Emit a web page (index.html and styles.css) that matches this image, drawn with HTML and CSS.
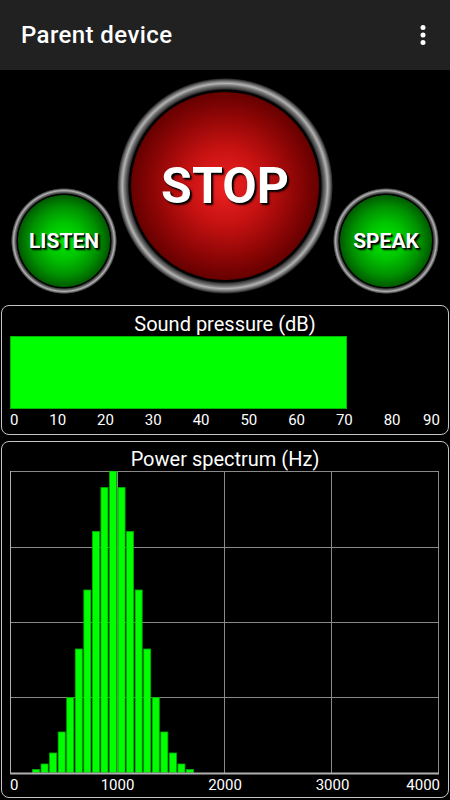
FILE: index.html
```html
<!DOCTYPE html>
<html lang="en">
<head>
<meta charset="utf-8">
<title>Parent device</title>
<link rel="stylesheet" href="styles.css">
</head>
<body>
<header class="appbar">
  <h1 class="title">Parent device</h1>
  <svg class="menu" viewBox="0 0 24 24" aria-label="More options">
    <circle cx="12" cy="6" r="2"/>
    <circle cx="12" cy="12" r="2"/>
    <circle cx="12" cy="18" r="2"/>
  </svg>
</header>
<main class="content">
  <section class="controls">
    <button class="btn btn-small"><span class="face face-green">LISTEN</span></button>
    <button class="btn btn-big"><span class="face face-red">STOP</span></button>
    <button class="btn btn-small"><span class="face face-green">SPEAK</span></button>
  </section>

  <section class="panel panel-db">
    <div class="panel-title">Sound pressure (dB)</div>
    <div class="meter"><div class="meter-fill" style="width:78.3%"></div></div>
    <div class="scale">
      <span class="tick tick-first"><span>0</span></span>
      <span class="tick"><span>10</span></span>
      <span class="tick"><span>20</span></span>
      <span class="tick"><span>30</span></span>
      <span class="tick"><span>40</span></span>
      <span class="tick"><span>50</span></span>
      <span class="tick"><span>60</span></span>
      <span class="tick"><span>70</span></span>
      <span class="tick"><span>80</span></span>
      <span class="tick tick-last"><span>90</span></span>
    </div>
  </section>

  <section class="panel panel-spec">
    <div class="panel-title">Power spectrum (Hz)</div>
    <svg class="plot" width="429" height="304" viewBox="0 0 429 304">
      <g class="grid">
        <line x1="107.5" y1="0" x2="107.5" y2="302"/>
        <line x1="214.5" y1="0" x2="214.5" y2="302"/>
        <line x1="321.5" y1="0" x2="321.5" y2="302"/>
        <line x1="428.5" y1="0" x2="428.5" y2="302"/>
        <line x1="0" y1="0.5" x2="429" y2="0.5"/>
        <line x1="0" y1="76.5" x2="429" y2="76.5"/>
        <line x1="0" y1="151.5" x2="429" y2="151.5"/>
        <line x1="0" y1="226.5" x2="429" y2="226.5"/>
      </g>
      <g class="bars">
        <rect x="22.5" y="298.5" width="7" height="3"/>
        <rect x="31.06" y="293" width="7" height="8.5"/>
        <rect x="39.61" y="282" width="7" height="19.5"/>
        <rect x="48.17" y="261" width="7" height="40.5"/>
        <rect x="56.72" y="226.5" width="7" height="75"/>
        <rect x="65.28" y="178" width="7" height="123.5"/>
        <rect x="73.83" y="119" width="7" height="182.5"/>
        <rect x="82.39" y="60.5" width="7" height="241"/>
        <rect x="90.94" y="16.5" width="7" height="285"/>
        <rect x="99.5" y="0" width="7" height="301.5"/>
        <rect x="108.06" y="16.5" width="7" height="285"/>
        <rect x="116.61" y="60.5" width="7" height="241"/>
        <rect x="125.17" y="119" width="7" height="182.5"/>
        <rect x="133.72" y="178" width="7" height="123.5"/>
        <rect x="142.28" y="226.5" width="7" height="75"/>
        <rect x="150.83" y="261" width="7" height="40.5"/>
        <rect x="159.39" y="282" width="7" height="19.5"/>
        <rect x="167.94" y="293" width="7" height="8.5"/>
        <rect x="176.5" y="298.5" width="7" height="3"/>
      </g>
      <g class="axis">
        <line x1="0.5" y1="0" x2="0.5" y2="303"/>
        <line x1="0" y1="302.5" x2="429" y2="302.5"/>
      </g>
    </svg>
    <div class="scale">
      <span class="tick tick-first"><span>0</span></span>
      <span class="tick"><span>1000</span></span>
      <span class="tick"><span>2000</span></span>
      <span class="tick"><span>3000</span></span>
      <span class="tick tick-last"><span>4000</span></span>
    </div>
  </section>
</main>
</body>
</html>
```

FILE: styles.css
```css
* {
  box-sizing: border-box;
}

html,
body {
  margin: 0;
  background: #000;
}

body {
  width: 450px;
  height: 800px;
  overflow: hidden;
  font-family: Roboto, "Noto Sans", "Liberation Sans", sans-serif;
  color: #fff;
}

/* ---------- app bar ---------- */
.appbar {
  height: 70px;
  background: #212121;
  display: flex;
  align-items: center;
  justify-content: space-between;
  padding: 0 12px 0 21px;
}

.title {
  margin: 0;
  font-size: 24px;
  font-weight: 500;
  letter-spacing: 0.4px;
}

.menu {
  width: 30px;
  height: 30px;
  fill: #fff;
}

/* ---------- round buttons ---------- */
.controls {
  height: 235px;
  display: flex;
  justify-content: center;
  align-items: flex-end;
  padding-bottom: 11px;
}

.btn {
  border: 0;
  padding: 0;
  border-radius: 50%;
  display: flex;
  align-items: center;
  justify-content: center;
  font-family: inherit;
  background: radial-gradient(circle closest-side,
      #000 0 87%,
      #050505 89%,
      #353535 90%,
      #777 93%,
      #b4b4b4 95%,
      #7a7a7a 97%,
      #333 99%,
      rgba(40, 40, 40, 0) 100%);
}

.btn-small {
  width: 106px;
  height: 106px;
}

.btn-big {
  width: 216px;
  height: 216px;
}

.face {
  width: 87%;
  height: 87%;
  border-radius: 50%;
  display: flex;
  align-items: center;
  justify-content: center;
  color: #fff;
  font-weight: 700;
  text-shadow: 2px 2px 2px #000, 1px 1px 1px #000;
}

.face-red {
  font-size: 50px;
  background: radial-gradient(circle closest-side,
      #ee2222 0%,
      #c81212 40%,
      #900606 75%,
      #660000 100%);
}

.face-green {
  font-size: 21px;
  background: radial-gradient(circle closest-side,
      #00e600 0%,
      #00c400 40%,
      #009000 75%,
      #005a00 100%);
}

/* ---------- panels ---------- */
.panel {
  margin: 0 1px;
  border: 1.5px solid #c4c4c4;
  border-radius: 8px;
  padding: 0 8px;
}

.panel-title {
  font-size: 20px;
  line-height: 24px;
  text-align: center;
}

.panel-db {
  height: 130px;
  padding-top: 6px;
}

.meter {
  height: 73px;
}

.meter-fill {
  height: 100%;
  background: #00ff00;
  box-shadow: inset 0 0 0 1px #00b400;
}

.panel-spec {
  margin-top: 6px;
  height: 357px;
  padding-top: 5px;
}

.plot {
  display: block;
}

.grid line {
  stroke: #8a8a8a;
  stroke-width: 1;
}

.bars rect {
  fill: #00ff00;
  stroke: #00b000;
  stroke-width: 0.8;
}

.axis line {
  stroke: #b0b0b0;
}

.axis line:first-child {
  stroke-width: 1;
}

.axis line:last-child {
  stroke-width: 2;
}

/* ---------- scales ---------- */
.scale {
  display: flex;
  justify-content: space-between;
  font-size: 15px;
  line-height: 23px;
}

.panel-spec .scale {
  line-height: 20px;
}

.tick {
  width: 0;
  display: flex;
  justify-content: center;
  white-space: nowrap;
}

.tick-first {
  justify-content: flex-start;
}

.tick-last {
  justify-content: flex-end;
}
```
